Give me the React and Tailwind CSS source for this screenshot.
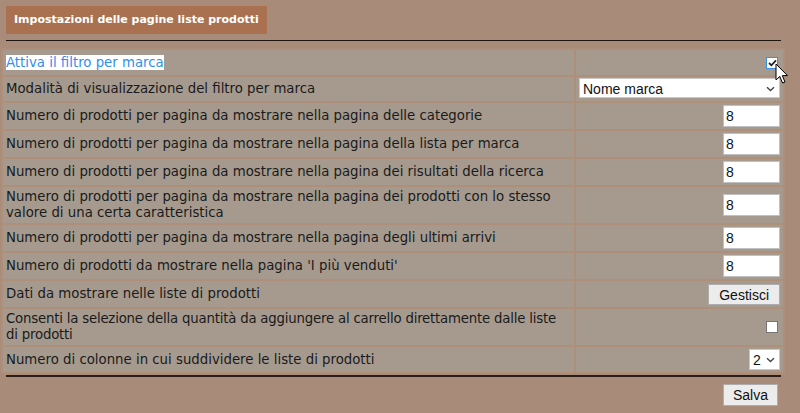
import { useState } from 'react';

const ROWS = [
  { label: "Numero di prodotti per pagina da mostrare nella pagina delle categorie", value: "8" },
  { label: "Numero di prodotti per pagina da mostrare nella pagina della lista per marca", value: "8" },
  { label: "Numero di prodotti per pagina da mostrare nella pagina dei risultati della ricerca", value: "8" },
  { label: "Numero di prodotti per pagina da mostrare nella pagina dei prodotti con lo stesso valore di una certa caratteristica", value: "8" },
  { label: "Numero di prodotti per pagina da mostrare nella pagina degli ultimi arrivi", value: "8" },
  { label: "Numero di prodotti da mostrare nella pagina 'I più venduti'", value: "8" },
];

const Chevron = () => (
  <svg width="9" height="6" viewBox="0 0 9 6" className="absolute right-[5px] top-1/2 -translate-y-1/2 pointer-events-none">
    <path d="M1 1.2 L4.5 4.5 L8 1.2" fill="none" stroke="#444" strokeWidth="1.4" />
  </svg>
);

export default function App() {
  const [brandFilter, setBrandFilter] = useState(true);
  const [qtySelect, setQtySelect] = useState(false);

  return (
    <div className="w-[800px] h-[413px] bg-[#a88b78] overflow-hidden relative text-[13.3px] text-[#1a1a1a]" style={{ fontFamily: '"DejaVu Sans", Verdana, sans-serif' }}>
      <div className="pt-[6px] pl-[6px]">
        <div className="inline-block bg-[#a9714f] text-white font-bold text-[11px] h-[28px] leading-[28px] px-[8px]">
          Impostazioni delle pagine liste prodotti
        </div>
      </div>
      <div className="ml-[6px] mt-[6px] w-[775px] border-t border-[#1c1510]"></div>

      <table className="ml-[1px] mt-[7px] w-[784px] border-separate border-spacing-[2px] bg-[#ae8f7a]">
        <tbody>
          <tr className="h-[25px]">
            <td className="bg-[#a69a8f] px-[3px] w-[571px]">
              <span className="bg-white text-[#2f8ef0]">Attiva il filtro per marca</span>
            </td>
            <td className="bg-[#a69a8f] pl-[3px] pr-[5px] text-right">
              <span className="inline-flex items-center justify-center align-middle w-[12px] h-[12px] bg-white border border-[#3c8fe6]" onClick={() => setBrandFilter(!brandFilter)}>
                {brandFilter && (
                  <svg width="9" height="8" viewBox="0 0 9 8">
                    <path d="M1 4 L3.4 6.3 L8 1.4" fill="none" stroke="#222" strokeWidth="1.8" />
                  </svg>
                )}
              </span>
            </td>
          </tr>
          <tr className="h-[24px]">
            <td className="bg-[#a69a8f] px-[3px]">Modalità di visualizzazione del filtro per marca</td>
            <td className="bg-[#a69a8f] px-[3px] text-right">
              <div className="relative inline-block align-middle">
                <select className="appearance-none w-[201px] h-[20px] bg-white border border-[#c8c8c8] text-[14px] pl-[3px] text-left text-[#111]" style={{ fontFamily: '"Liberation Sans", Arial, sans-serif' }} defaultValue="nome">
                  <option value="nome">Nome marca</option>
                </select>
                <Chevron />
              </div>
            </td>
          </tr>
          {ROWS.map((r, i) => (
            <tr key={i} className="h-[26px]">
              <td className="bg-[#a69a8f] px-[3px] leading-[16px] py-[2px]">{r.label}</td>
              <td className="bg-[#a69a8f] px-[3px] text-right">
                <input type="text" defaultValue={r.value} className="w-[57px] h-[22px] bg-white border border-[#c0c0c0] px-[2px] text-[14px] align-middle text-[#111]" style={{ fontFamily: '"Liberation Sans", Arial, sans-serif' }} />
              </td>
            </tr>
          ))}
          <tr className="h-[26px]">
            <td className="bg-[#a69a8f] px-[3px]">Dati da mostrare nelle liste di prodotti</td>
            <td className="bg-[#a69a8f] px-[3px] text-right">
              <button className="h-[21px] px-[10px] bg-[#ececec] border border-[#adadad] text-[14px] align-middle text-[#111]" style={{ fontFamily: '"Liberation Sans", Arial, sans-serif' }}>Gestisci</button>
            </td>
          </tr>
          <tr className="h-[36px]">
            <td className="bg-[#a69a8f] px-[3px] leading-[16px] py-[2px] tracking-[-0.2px]">Consenti la selezione della quantità da aggiungere al carrello direttamente dalle liste di prodotti</td>
            <td className="bg-[#a69a8f] pl-[3px] pr-[5px] text-right">
              <span className="inline-block align-middle w-[12px] h-[12px] bg-white border border-[#767676]" onClick={() => setQtySelect(!qtySelect)}></span>
            </td>
          </tr>
          <tr className="h-[25px]">
            <td className="bg-[#a69a8f] px-[3px]">Numero di colonne in cui suddividere le liste di prodotti</td>
            <td className="bg-[#a69a8f] px-[3px] text-right">
              <div className="relative inline-block align-middle">
                <select className="appearance-none w-[31px] h-[21px] bg-white border border-[#c8c8c8] text-[14px] pl-[3px] text-left text-[#111]" style={{ fontFamily: '"Liberation Sans", Arial, sans-serif' }} defaultValue="2">
                  <option value="2">2</option>
                </select>
                <Chevron />
              </div>
            </td>
          </tr>
        </tbody>
      </table>

      <div className="ml-[6px] mt-[1px] w-[775px] border-t-2 border-[#2a1f18]"></div>
      <div className="flex justify-end w-[778px] mt-[7px]">
        <button className="h-[22px] px-[9px] bg-[#ececec] border border-[#adadad] text-[14px] text-[#111]" style={{ fontFamily: '"Liberation Sans", Arial, sans-serif' }}>Salva</button>
      </div>

      <svg width="14" height="22" viewBox="0 0 14 22" className="absolute left-[775px] top-[63px]">
        <path d="M1 1 L1 17 L4.8 13.4 L7.6 20 L10 19 L7.3 12.6 L12.5 12.6 Z" fill="white" stroke="black" strokeWidth="1" strokeLinejoin="round" />
      </svg>
    </div>
  );
}
